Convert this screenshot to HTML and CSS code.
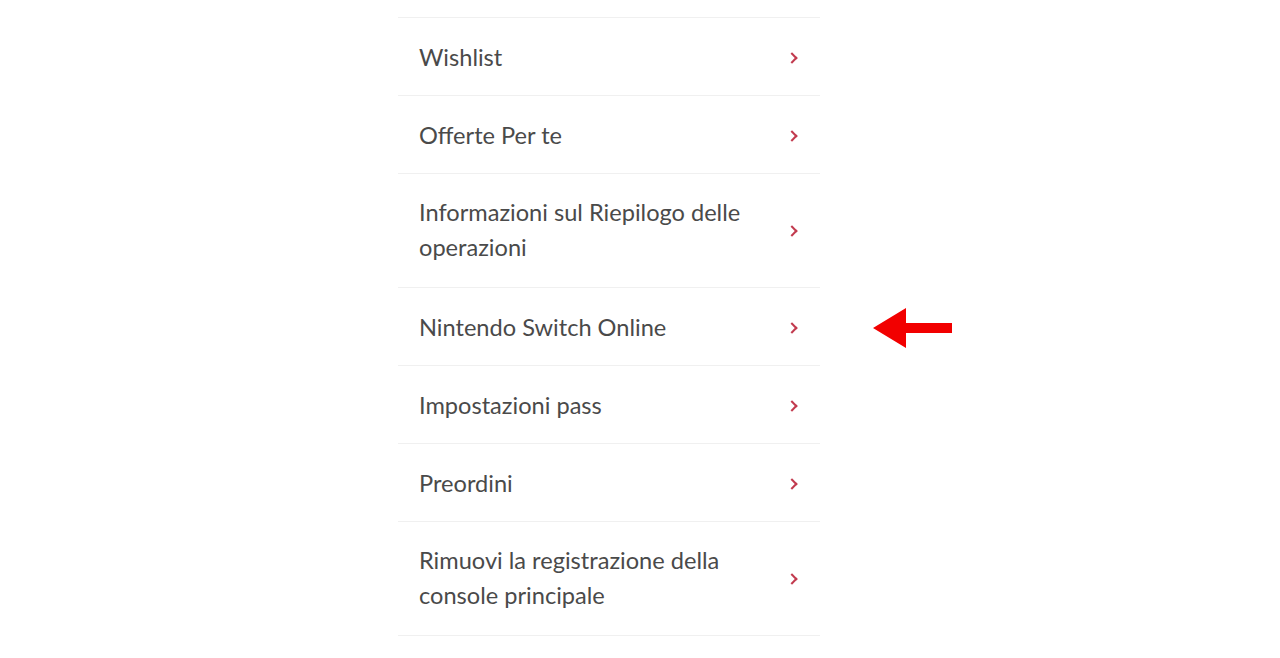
FILE: index.html
```html
<!DOCTYPE html>
<html lang="it">
<head>
    <meta charset="UTF-8">
    <meta name="viewport" content="width=device-width, initial-scale=1.0">
    <title>Impostazioni account</title>
    <link rel="stylesheet" href="styles.css">
</head>
<body>
    <div class="page">
        <ul class="menu">
            <li><a href="#">Wishlist<span class="chev"></span></a></li>
            <li><a href="#">Offerte Per te<span class="chev"></span></a></li>
            <li><a href="#" class="two">Informazioni sul Riepilogo delle operazioni<span class="chev"></span></a></li>
            <li class="marked">
                <a href="#">Nintendo Switch Online<span class="chev"></span></a>
                <svg class="pointer" width="82" height="42" viewBox="0 0 82 42">
                    <polygon points="1,21 34,1 34,16 80,16 80,26 34,26 34,41" fill="#f20000"/>
                </svg>
            </li>
            <li><a href="#">Impostazioni pass<span class="chev"></span></a></li>
            <li><a href="#">Preordini<span class="chev"></span></a></li>
            <li><a href="#" class="two">Rimuovi la registrazione della console principale<span class="chev"></span></a></li>
        </ul>
    </div>
</body>
</html>
```

FILE: styles.css
```css
body {
    margin: 0;
    background: #fff;
    font-family: Lato, "Open Sans", sans-serif;
}
.page {
    padding: 17px 0 0 398px;
}
.menu {
    list-style: none;
    margin: 0;
    padding: 0;
    width: 422px;
    border-top: 1px solid #f0f0f0;
}
.menu li {
    position: relative;
    border-bottom: 1px solid #f0f0f0;
}
.menu a {
    display: flex;
    align-items: center;
    justify-content: space-between;
    min-height: 77px;
    box-sizing: border-box;
    padding: 2px 24px 0 21px;
    color: #4a4a4a;
    text-decoration: none;
    font-size: 23.6px;
    line-height: 35px;
}
.menu a.two {
    padding-top: 21px;
    padding-bottom: 22px;
    padding-right: 70px;
    position: relative;
}
.chev {
    flex: none;
    width: 6px;
    height: 6px;
    border-top: 2px solid #c23a4e;
    border-right: 2px solid #c23a4e;
    transform: rotate(45deg);
}
.menu a.two .chev {
    position: absolute;
    right: 24px;
    top: 50%;
    margin-top: -4px;
}
.pointer {
    position: absolute;
    left: 474px;
    top: 19px;
}
```
